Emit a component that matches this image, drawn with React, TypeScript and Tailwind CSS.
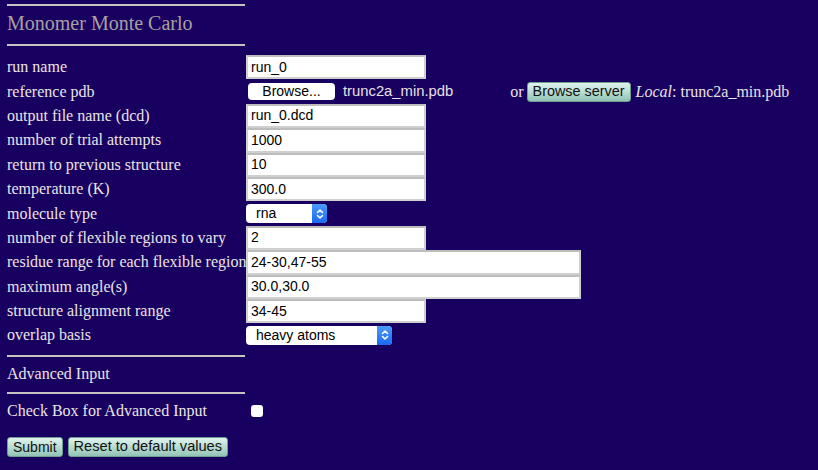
const serif = "font-['Liberation_Serif','Times_New_Roman',serif]";
const sans = "font-['Liberation_Sans',Arial,sans-serif]";

const Rule = () => <div className="w-[238px] h-[2px] bg-[#c9c2c2]" />;

const TextBox = ({ value, wide }: { value: string; wide?: boolean }) => (
  <div
    className={`${wide ? "w-[335px]" : "w-[180px]"} h-[24.4px] bg-white border-2 border-[#cfcfcf] border-t-[#bdbdbd] pl-[3px] flex items-center text-[14px] text-black ${sans}`}
  >
    {value}
  </div>
);

const Chevrons = () => (
  <svg width="8" height="12" viewBox="0 0 8 12" fill="none" stroke="white" strokeWidth="1.6" strokeLinecap="round" strokeLinejoin="round">
    <path d="M1.5 4.5 L4 2 L6.5 4.5" />
    <path d="M1.5 7.5 L4 10 L6.5 7.5" />
  </svg>
);

const Select = ({ value, width }: { value: string; width: string }) => (
  <div className={`${width} h-[19px] bg-white rounded-[4px] flex items-stretch overflow-hidden ${sans}`}>
    <div className="flex-1 pl-[10px] flex items-center text-[14px] text-black">{value}</div>
    <div className="w-[15px] bg-gradient-to-b from-[#4b9bfb] to-[#1769f0] flex items-center justify-center">
      <Chevrons />
    </div>
  </div>
);

const TealButton = ({ children, className = "" }: { children: React.ReactNode; className?: string }) => (
  <button
    className={`h-[20px] rounded-[3px] border border-[#6f9d90] bg-gradient-to-b from-[#e0f4ee] to-[#92c4b5] text-[#111] leading-none ${sans} ${className}`}
  >
    {children}
  </button>
);

const rows: { label: string; field: React.ReactNode }[] = [
  { label: "run name", field: <TextBox value="run_0" /> },
  {
    label: "reference pdb",
    field: (
      <div className="flex items-center h-[24.4px]">
        <div className={`ml-[2px] w-[87px] h-[17px] bg-white rounded-[4px] flex items-center justify-center text-[14px] text-black ${sans}`}>
          Browse...
        </div>
        <span className={`ml-[8px] text-[14.8px] text-[#e8e2e2] ${sans}`}>trunc2a_min.pdb</span>
        <span className="ml-[57px] text-[16px] text-[#e8e2e2]">or</span>
        <TealButton className="ml-[3px] px-[5px] text-[14.4px]">Browse server</TealButton>
        <span className="ml-[5px] text-[16px] text-[#e8e2e2]">
          <i>Local</i>: trunc2a_min.pdb
        </span>
      </div>
    ),
  },
  { label: "output file name (dcd)", field: <TextBox value="run_0.dcd" /> },
  { label: "number of trial attempts", field: <TextBox value="1000" /> },
  { label: "return to previous structure", field: <TextBox value="10" /> },
  { label: "temperature (K)", field: <TextBox value="300.0" /> },
  {
    label: "molecule type",
    field: (
      <div className="h-[24.4px] flex items-center">
        <Select value="rna" width="w-[81px]" />
      </div>
    ),
  },
  { label: "number of flexible regions to vary", field: <TextBox value="2" /> },
  { label: "residue range for each flexible region", field: <TextBox value="24-30,47-55" wide /> },
  { label: "maximum angle(s)", field: <TextBox value="30.0,30.0" wide /> },
  { label: "structure alignment range", field: <TextBox value="34-45" /> },
  {
    label: "overlap basis",
    field: (
      <div className="h-[24.4px] flex items-center">
        <Select value="heavy atoms" width="w-[146px]" />
      </div>
    ),
  },
];

export default function App() {
  return (
    <div className={`w-[818px] h-[470px] bg-[#180060] text-[#ebe5e5] px-[7px] pt-[4px] overflow-hidden ${serif}`}>
      <Rule />
      <h1 className="mt-[5px] mb-[9px] h-[24px] leading-[24px] text-[20px] text-[#aaa0a0]">Monomer Monte Carlo</h1>
      <Rule />

      <div className="mt-[9px] grid grid-cols-[239px_auto]">
        {rows.map((row, i) => (
          <div key={i} className="contents">
            <div className="h-[24.4px] flex items-center text-[16px] whitespace-nowrap">{row.label}</div>
            <div>{row.field}</div>
          </div>
        ))}
      </div>

      <div className="mt-[7px]">
        <Rule />
      </div>
      <div className="h-[35px] flex items-center text-[16px]">Advanced Input</div>
      <Rule />
      <div className="mt-[4px] h-[26px] flex items-center text-[16px]">
        <span className="w-[244px]">Check Box for Advanced Input</span>
        <span className="w-[12px] h-[12px] bg-white rounded-[3px]" />
      </div>
      <div className="mt-[13px] flex gap-[5px]">
        <TealButton className="px-[5px] text-[14px]">Submit</TealButton>
        <TealButton className="px-[5px] text-[14.6px]">Reset to default values</TealButton>
      </div>
    </div>
  );
}
